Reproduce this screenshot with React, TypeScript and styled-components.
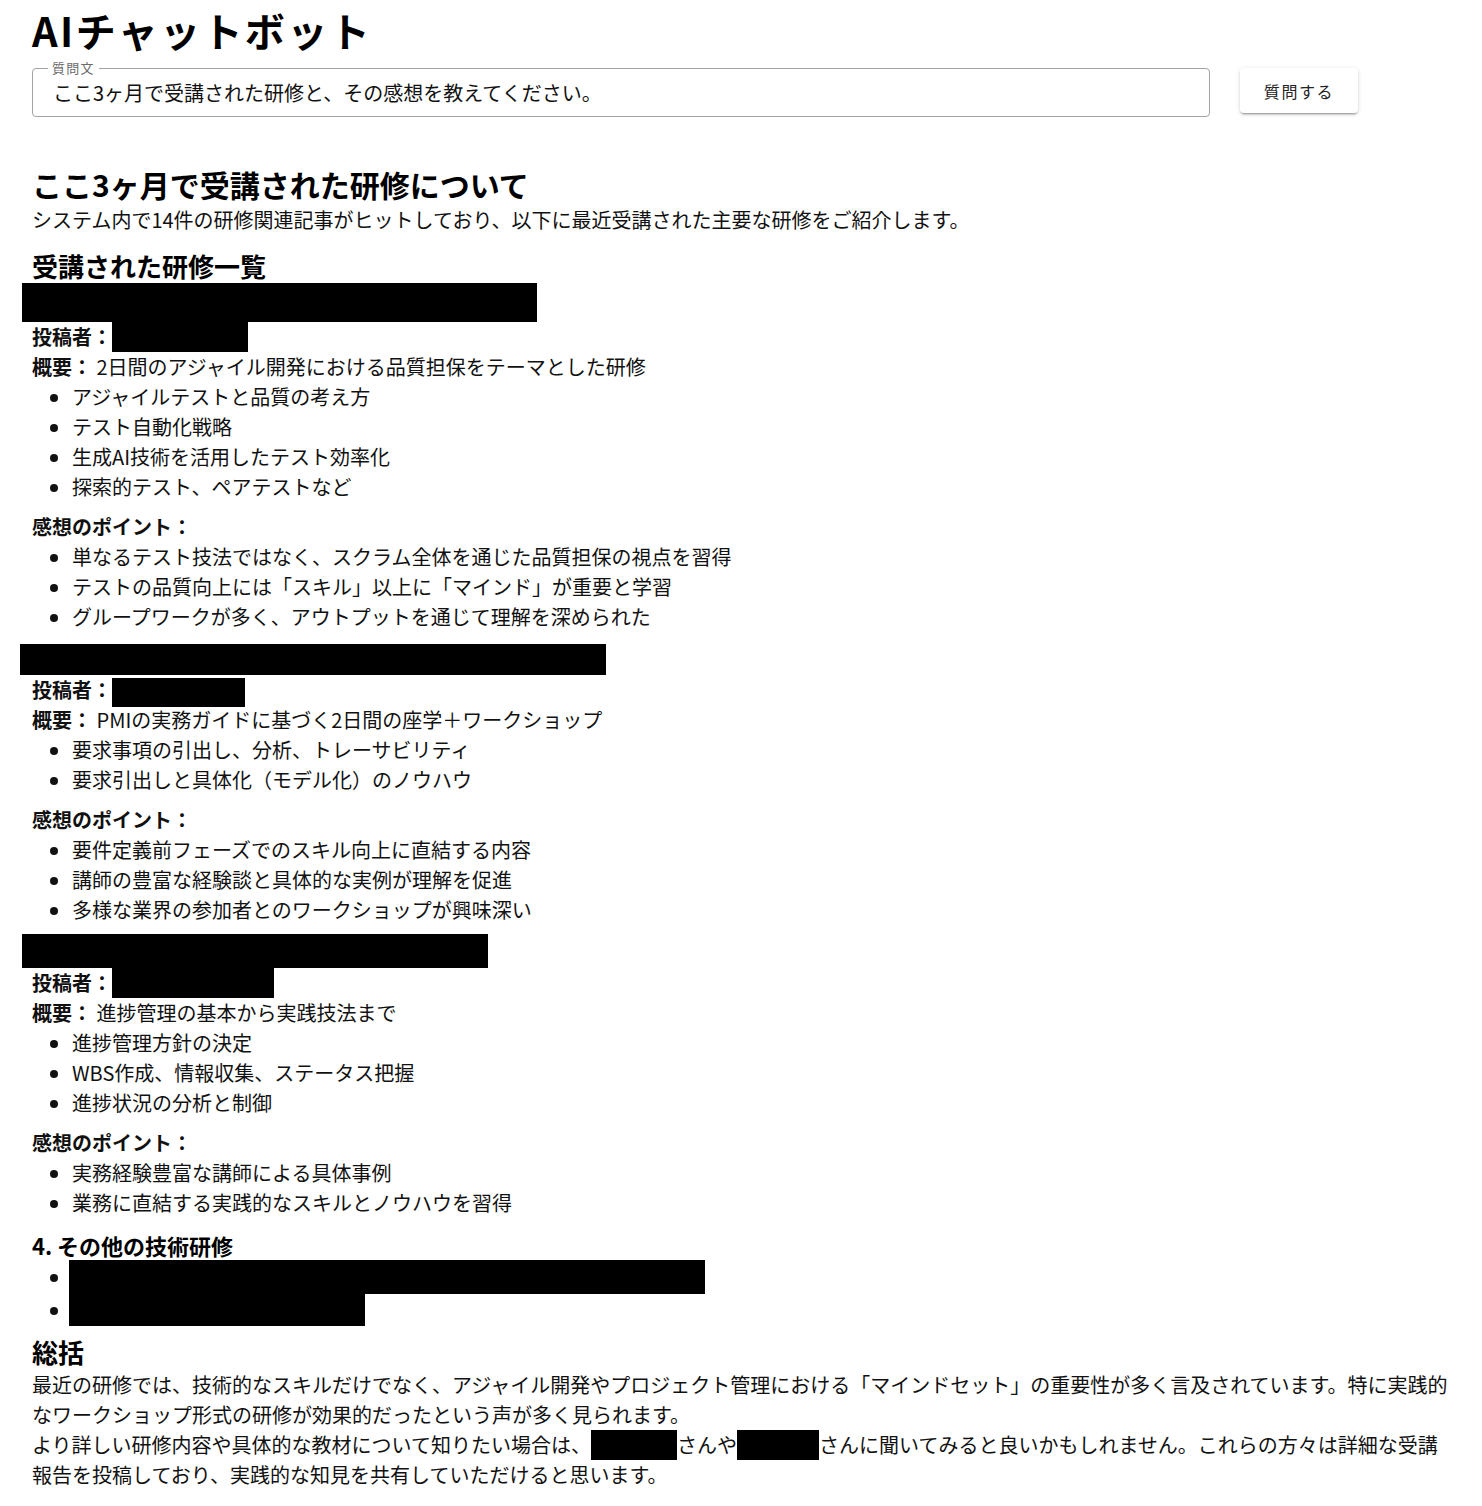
import React from "react";
import styled, { createGlobalStyle } from "styled-components";

const GlobalStyle = createGlobalStyle`
  html, body {
    margin: 0;
    padding: 0;
    background: #ffffff;
  }
  body {
    font-family: "Noto Sans CJK JP", "Noto Sans", sans-serif;
    color: #111;
  }
`;

type Training = {
  title: { w: number; h: number; x: number; top: number };
  author: { w: number; h: number; mt: number; mb: number };
  summary: string;
  topics: string[];
  points: string[];
};

const trainings: Training[] = [
  {
    title: { w: 515, h: 39, x: -10, top: 1 },
    author: { w: 136, h: 31, mt: -1, mb: 0 },
    summary: "2日間のアジャイル開発における品質担保をテーマとした研修",
    topics: [
      "アジャイルテストと品質の考え方",
      "テスト自動化戦略",
      "生成AI技術を活用したテスト効率化",
      "探索的テスト、ペアテストなど",
    ],
    points: [
      "単なるテスト技法ではなく、スクラム全体を通じた品質担保の視点を習得",
      "テストの品質向上には「スキル」以上に「マインド」が重要と学習",
      "グループワークが多く、アウトプットを通じて理解を深められた",
    ],
  },
  {
    title: { w: 586, h: 31, x: -12, top: 12 },
    author: { w: 133, h: 29, mt: 3, mb: -5 },
    summary: "PMIの実務ガイドに基づく2日間の座学＋ワークショップ",
    topics: ["要求事項の引出し、分析、トレーサビリティ", "要求引出しと具体化（モデル化）のノウハウ"],
    points: [
      "要件定義前フェーズでのスキル向上に直結する内容",
      "講師の豊富な経験談と具体的な実例が理解を促進",
      "多様な業界の参加者とのワークショップが興味深い",
    ],
  },
  {
    title: { w: 466, h: 34, x: -10, top: 9 },
    author: { w: 162, h: 30, mt: 0, mb: 0 },
    summary: "進捗管理の基本から実践技法まで",
    topics: ["進捗管理方針の決定", "WBS作成、情報収集、ステータス把握", "進捗状況の分析と制御"],
    points: ["実務経験豊富な講師による具体事例", "業務に直結する実践的なスキルとノウハウを習得"],
  },
];

export default function App() {
  return (
    <>
      <GlobalStyle />
      <Page>
        <Title>AIチャットボット</Title>
        <FormRow>
          <Field>
            <FieldLabel>質問文</FieldLabel>
            <FieldInput defaultValue="ここ3ヶ月で受講された研修と、その感想を教えてください。" />
          </Field>
          <AskButton type="button">質問する</AskButton>
        </FormRow>

        <Answer>
          <H2>ここ3ヶ月で受講された研修について</H2>
          <Para>
            システム内で14件の研修関連記事がヒットしており、以下に最近受講された主要な研修をご紹介します。
          </Para>
          <H3 $mt={15}>受講された研修一覧</H3>

          {trainings.map((t, i) => (
            <section key={i}>
              <RedactedBlock $w={t.title.w} $h={t.title.h} $x={t.title.x} $top={t.title.top} />
              <Para>
                <Strong>投稿者：</Strong>
                <RedactedInline $w={t.author.w} $h={t.author.h} $mt={t.author.mt} $mb={t.author.mb} />
              </Para>
              <Para>
                <Strong>概要：</Strong> {t.summary}
              </Para>
              <List>
                {t.topics.map((s) => (
                  <li key={s}>{s}</li>
                ))}
              </List>
              <Para $mt={10}>
                <Strong>感想のポイント：</Strong>
              </Para>
              <List>
                {t.points.map((s) => (
                  <li key={s}>{s}</li>
                ))}
              </List>
            </section>
          ))}

          <H4>4. その他の技術研修</H4>
          <List>
            <BoxItem $h={34}>
              <RedactedInline $w={636} $h={34} $x={-3} />
            </BoxItem>
            <BoxItem $h={32}>
              <RedactedInline $w={296} $h={32} $x={-3} />
            </BoxItem>
          </List>

          <H3 $mt={10}>総括</H3>
          <Para $mt={2}>
            最近の研修では、技術的なスキルだけでなく、アジャイル開発やプロジェクト管理における「マインドセット」の重要性が多く言及されています。特に実践的なワークショップ形式の研修が効果的だったという声が多く見られます。
          </Para>
          <Para>
            より詳しい研修内容や具体的な教材について知りたい場合は、
            <RedactedInline $w={86} $h={30} />
            さんや
            <RedactedInline $w={82} $h={30} />
            さんに聞いてみると良いかもしれません。これらの方々は詳細な受講報告を投稿しており、実践的な知見を共有していただけると思います。
          </Para>
        </Answer>
      </Page>
    </>
  );
}

const Page = styled.div`
  padding: 6px 29px 16px 32px;
`;

const Title = styled.h1`
  margin: 0;
  font-size: 40px;
  line-height: 48px;
  font-weight: 700;
  color: #000;
  letter-spacing: 0.06em;
`;

const FormRow = styled.div`
  display: flex;
  align-items: flex-start;
  gap: 30px;
  margin-top: 14px;
`;

const Field = styled.div`
  position: relative;
  width: 1178px;
  height: 49px;
  box-sizing: border-box;
  border: 1px solid #a3a3a3;
  border-radius: 4px;
  display: flex;
  align-items: center;
`;

const FieldLabel = styled.span`
  position: absolute;
  left: 15px;
  top: -10px;
  padding: 0 4px;
  background: #fff;
  font-size: 13px;
  line-height: 18px;
  letter-spacing: 0.1em;
  color: #6b6b6b;
`;

const FieldInput = styled.input`
  border: none;
  outline: none;
  background: transparent;
  width: 100%;
  padding: 0 0 0 20px;
  font-family: inherit;
  font-size: 20px;
  color: #111;
`;

const AskButton = styled.button`
  width: 118px;
  height: 45px;
  border: none;
  border-radius: 4px;
  background: #fff;
  font-family: inherit;
  font-size: 16px;
  letter-spacing: 0.1em;
  color: #222;
  cursor: pointer;
  box-shadow: 0 3px 1px -2px rgba(0, 0, 0, 0.2), 0 2px 2px 0 rgba(0, 0, 0, 0.14),
    0 1px 5px 0 rgba(0, 0, 0, 0.12);
`;

const Answer = styled.div`
  margin-top: 49px;
  font-size: 20px;
  line-height: 30px;
`;

const H2 = styled.h2`
  margin: 0 0 3px;
  font-size: 30px;
  line-height: 36px;
  font-weight: 700;
  color: #000;
`;

const H3 = styled.h3<{ $mt?: number }>`
  margin: ${(p) => p.$mt ?? 0}px 0 0;
  font-size: 26px;
  line-height: 32px;
  font-weight: 700;
  color: #000;
`;

const H4 = styled.h4`
  margin: 13px 0 1px;
  font-size: 22px;
  line-height: 28px;
  font-weight: 700;
  color: #000;
`;

const Para = styled.p<{ $mt?: number }>`
  margin: ${(p) => p.$mt ?? 0}px 0 0;
`;

const Strong = styled.strong`
  font-weight: 700;
`;

const List = styled.ul`
  margin: 0;
  padding-left: 40px;
`;

const BoxItem = styled.li<{ $h: number }>`
  height: ${(p) => p.$h}px;
  line-height: ${(p) => p.$h}px;
`;

const RedactedBlock = styled.div<{ $w: number; $h: number; $x: number; $top: number }>`
  width: ${(p) => p.$w}px;
  height: ${(p) => p.$h}px;
  margin-left: ${(p) => p.$x}px;
  margin-top: ${(p) => p.$top}px;
  background: #000;
`;

const RedactedInline = styled.span<{ $w: number; $h: number; $x?: number; $mt?: number; $mb?: number }>`
  display: inline-block;
  width: ${(p) => p.$w}px;
  height: ${(p) => p.$h}px;
  margin: ${(p) => p.$mt ?? 0}px 0 ${(p) => p.$mb ?? 0}px ${(p) => p.$x ?? 0}px;
  vertical-align: top;
  background: #000;
`;
